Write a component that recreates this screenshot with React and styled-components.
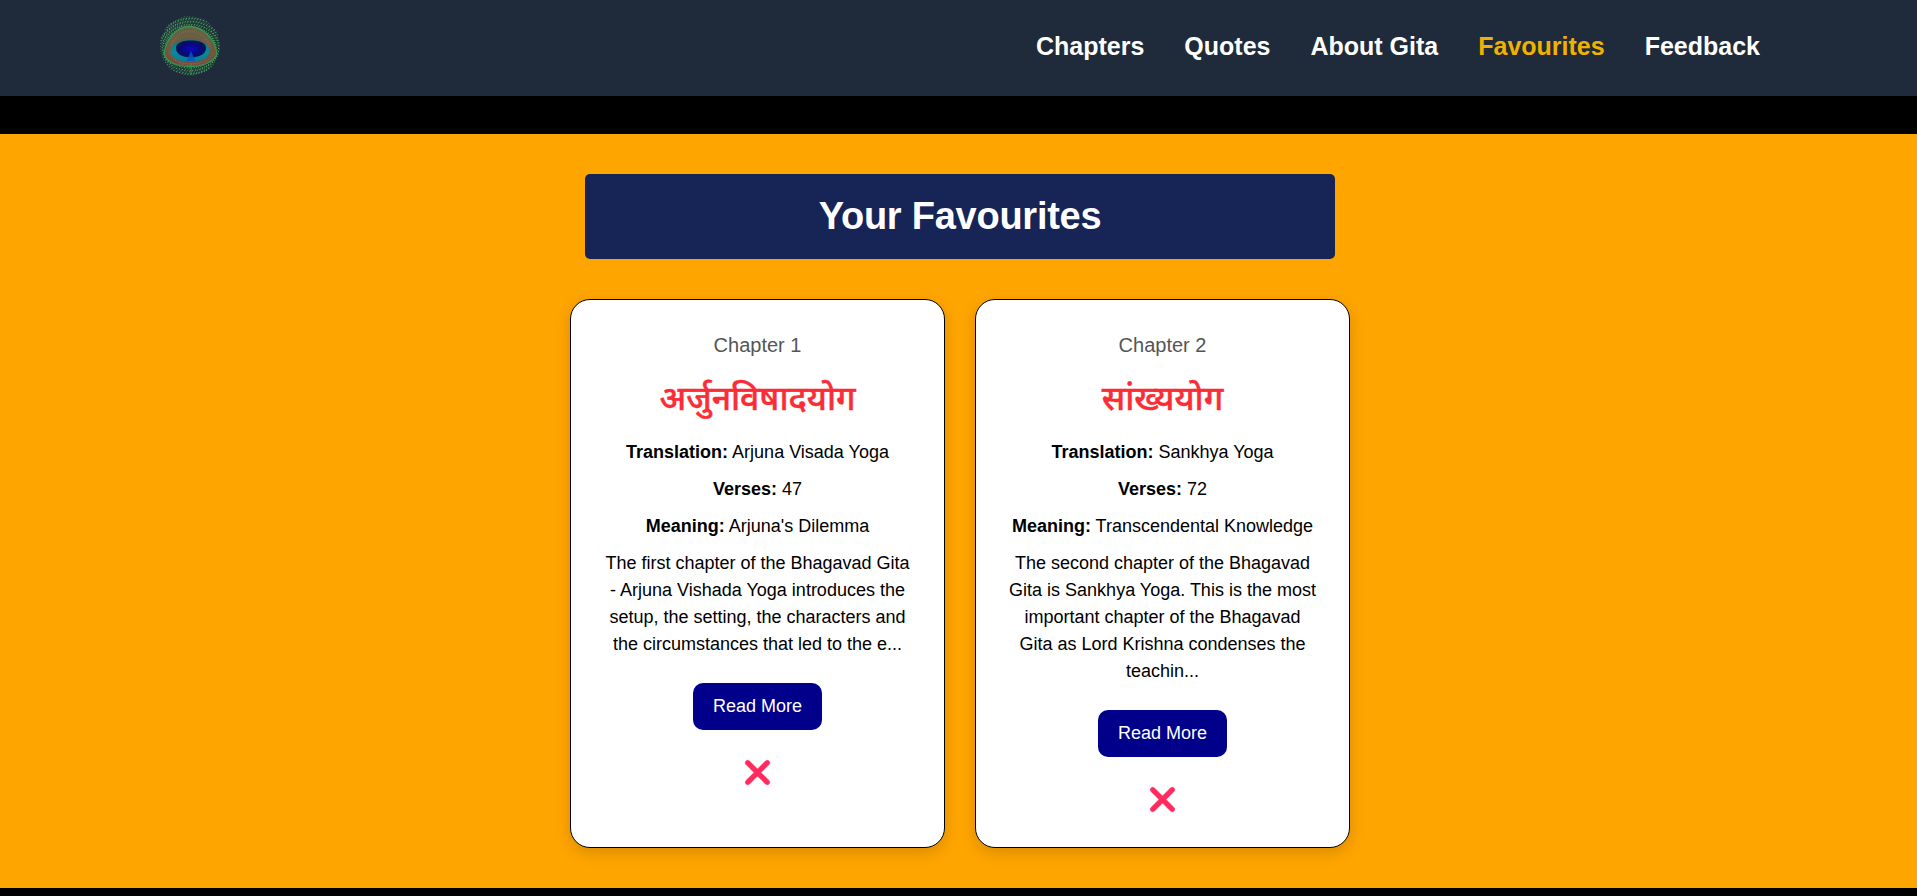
import React from "react";
import styled, { createGlobalStyle } from "styled-components";
import { FaXmark } from "react-icons/fa6";

const GlobalStyle = createGlobalStyle`
  *, *::before, *::after { box-sizing: border-box; margin: 0; padding: 0; }
  html { overflow: hidden; }
  body {
    width: 1920px;
    min-height: 100vh;
    background: #000;
    color: #000;
    font-family: Arial, "Liberation Sans", "Noto Sans Devanagari", "Noto Sans", sans-serif;
    line-height: 1.5;
  }
`;

const Header = styled.header`
  display: flex;
  align-items: center;
  justify-content: space-between;
  height: 96px;
  padding: 0 160px;
  background: #1f2a3a;
`;

const Logo = styled.svg`
  display: block;
  width: 60px;
  height: 60px;
  margin-top: -4px;
`;

const Nav = styled.nav`
  display: flex;
  gap: 40px;
  margin-top: -2px;
`;

const NavLink = styled.a`
  color: ${(p) => (p.$active ? "#f0b100" : "#fff")};
  font-size: 25px;
  font-weight: 700;
  text-decoration: none;
`;

const Main = styled.main`
  display: flex;
  flex-direction: column;
  align-items: center;
  gap: 40px;
  height: 754px;
  margin-top: 38px;
  padding-top: 40px;
  background: #ffa500;
`;

const Banner = styled.h1`
  display: flex;
  align-items: center;
  justify-content: center;
  width: 750px;
  height: 85px;
  border-radius: 5px;
  background: #162456;
  color: #fff;
  font-size: 38px;
  font-weight: 700;
  letter-spacing: -0.25px;
`;

const CardList = styled.section`
  display: flex;
  gap: 30px;
`;

const Card = styled.article`
  display: flex;
  flex-direction: column;
  align-items: center;
  width: 375px;
  height: 549px;
  padding: 30px;
  border: 1px solid #000;
  border-radius: 20px;
  background: #fff;
  box-shadow: 0 5px 15px rgba(0, 0, 0, 0.15);
  font-size: 18px;
  text-align: center;

  > * {
    flex-shrink: 0;
  }
`;

const ChapterLabel = styled.p`
  color: #555;
  font-size: 20px;
`;

const ChapterName = styled.h2`
  height: 59px;
  margin: 10px 0;
  color: #fb2c36;
  font-size: 33.8px;
  font-weight: 500;
  line-height: 56px;
  white-space: nowrap;
  -webkit-text-stroke: 0.45px #fb2c36;
`;

const Detail = styled.p`
  margin-bottom: 10px;
`;

const Summary = styled.p``;

const ReadButton = styled.button`
  margin-top: 25px;
  padding: 10px 20px;
  border: 0;
  border-radius: 10px;
  background: #00008b;
  color: #fff;
  font: inherit;
`;

const RemoveButton = styled.button`
  display: flex;
  margin: 23px 1px 0 0;
  border: 0;
  background: none;
  color: #ff2b5e;
  font-size: 39px;

  svg {
    stroke: #ff2b5e;
    stroke-width: 8px;
  }
`;

const links = ["Chapters", "Quotes", "About Gita", "Favourites", "Feedback"];

const chapters = [
  {
    number: 1,
    name: "अर्जुनविषादयोग",
    translation: "Arjuna Visada Yoga",
    verses: 47,
    meaning: "Arjuna's Dilemma",
    summary:
      "The first chapter of the Bhagavad Gita - Arjuna Vishada Yoga introduces the setup, the setting, the characters and the circumstances that led to the e...",
  },
  {
    number: 2,
    name: "सांख्ययोग",
    translation: "Sankhya Yoga",
    verses: 72,
    meaning: "Transcendental Knowledge",
    summary:
      "The second chapter of the Bhagavad Gita is Sankhya Yoga. This is the most important chapter of the Bhagavad Gita as Lord Krishna condenses the teachin...",
  },
];

// Fine barbs fanning out around the feather's eye.
function fan(count, rx, ry, outer, twist) {
  return Array.from({ length: count }, (_, i) => {
    const a = (i / count) * Math.PI * 2;
    const x1 = 30 + rx * Math.cos(a);
    const y1 = 32 + ry * Math.sin(a);
    const x2 = 30 + outer * Math.cos(a + twist);
    const y2 = 30 + outer * Math.sin(a + twist);
    return `M${x1} ${y1}L${x2} ${y2}`;
  }).join("");
}

function FeatherLogo() {
  return (
    <Logo viewBox="0 0 60 60" aria-label="Peacock feather">
      <defs>
        <radialGradient id="iris" cx="50%" cy="50%" r="52%">
          <stop offset="0" stopColor="#0a0ac0" />
          <stop offset="0.6" stopColor="#08087c" />
          <stop offset="1" stopColor="#061648" />
        </radialGradient>
        <linearGradient id="ring" x1="0" y1="0" x2="0" y2="1">
          <stop offset="0" stopColor="#087b83" />
          <stop offset="0.6" stopColor="#088a9c" />
          <stop offset="1" stopColor="#0a78a0" />
        </linearGradient>
        <linearGradient id="bronze" x1="0" y1="0" x2="0" y2="1">
          <stop offset="0" stopColor="#5c6045" />
          <stop offset="0.5" stopColor="#70583f" />
          <stop offset="1" stopColor="#704a3c" />
        </linearGradient>
      </defs>
      <circle cx="30" cy="30" r="29.6" fill="#1f403a" />
      <path d={fan(64, 22, 16, 30, 0.3)} stroke="#55a06c" strokeWidth="1" strokeDasharray="2.2 1.3" />
      <path d={fan(48, 22, 16, 29.6, -0.25)} stroke="#16282c" strokeWidth="0.8" strokeDasharray="1.4 1.8" />
      <path d="M4 37C7 22 17 10.5 29 10.5C42 10.5 55 22 57 38C54 46 42 50.5 30 50.5C18 50.5 6 47 4 37Z" fill="url(#bronze)" stroke="#2f9a4c" strokeWidth="1.3" />
      <path d={fan(56, 18, 11, 21, 0)} stroke="#907650" strokeWidth="0.6" strokeDasharray="1 1" opacity="0.8" />
      <path d="M11 30C15 20 22 15 30 15C39 15 47 22 50 31M8 35C12 45 20 48 30 48C42 48 50 45 53 36" fill="none" stroke="#8a7050" strokeWidth="1" strokeDasharray="1 1" />
      <path d="M10.5 35C10.5 28 19 24 30 24C42 24 49.5 28 49.5 35C49.5 42 40 46 30 46C19 46 10.5 42 10.5 35Z" fill="url(#ring)" />
      <path d="M16 32C16 27 22 24.500 31 24.500C40 24.500 46 27 46 32C46 38 39 41.500 31 41.500C22 41.500 16 38 16 32Z" fill="url(#iris)" />
      <path d="M31 35L35.500 45H26.500Z" fill="#0757bf" opacity="0.85" />
      <path d="M31 47V59" stroke="#3c8e4d" strokeWidth="1" />
    </Logo>
  );
}

function ChapterCard({ chapter }) {
  return (
    <Card>
      <ChapterLabel>Chapter {chapter.number}</ChapterLabel>
      <ChapterName lang="hi">{chapter.name}</ChapterName>
      <Detail><b>Translation:</b> {chapter.translation}</Detail>
      <Detail><b>Verses:</b> {chapter.verses}</Detail>
      <Detail><b>Meaning:</b> {chapter.meaning}</Detail>
      <Summary>{chapter.summary}</Summary>
      <ReadButton>Read More</ReadButton>
      <RemoveButton aria-label="Remove"><FaXmark /></RemoveButton>
    </Card>
  );
}

export default function App() {
  return (
    <>
      <GlobalStyle />
      <Header>
        <FeatherLogo />
        <Nav>
          {links.map((link) => (
            <NavLink key={link} $active={link === "Favourites"}>{link}</NavLink>
          ))}
        </Nav>
      </Header>
      <Main>
        <Banner>Your Favourites</Banner>
        <CardList>
          {chapters.map((chapter) => (
            <ChapterCard key={chapter.number} chapter={chapter} />
          ))}
        </CardList>
      </Main>
    </>
  );
}
